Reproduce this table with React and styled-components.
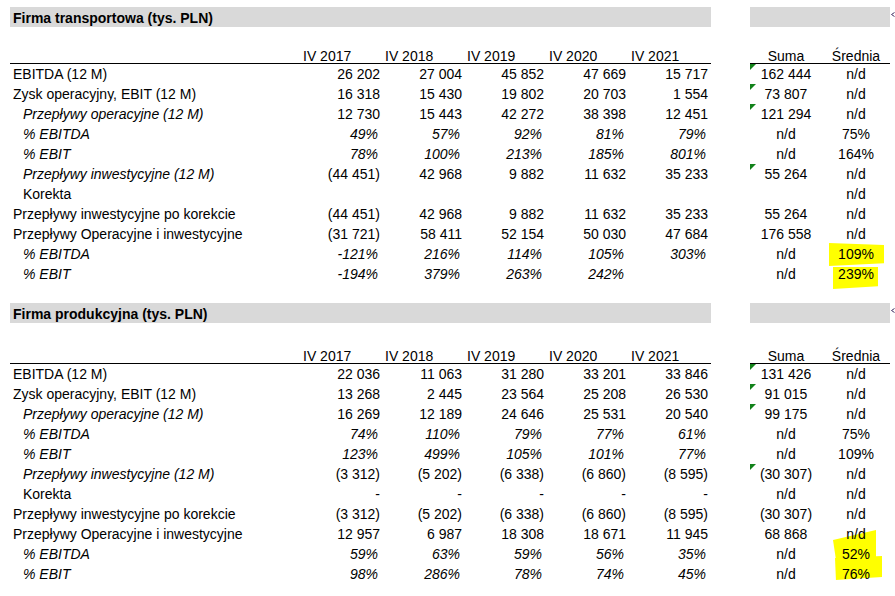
import React from "react";
import styled, { createGlobalStyle } from "styled-components";

const Global = createGlobalStyle`
  html, body { margin: 0; padding: 0; background: #fff; }
  body {
    font-family: "Liberation Sans", Arial, sans-serif;
    font-size: 14px;
    color: #000;
  }
`;

const Page = styled.div`
  padding: 7px 0 0 10px;
`;

const Section = styled.section`
  display: flex;
  align-items: flex-start;
  margin-top: ${(p) => p.$mt || 0}px;
`;

const Left = styled.div`
  flex: 0 0 701px;
  width: 701px;
  display: flex;
  flex-direction: column;
`;

const Right = styled.div`
  flex: 0 0 140px;
  width: 140px;
  margin-left: 39px;
  display: flex;
  flex-direction: column;
`;

const BarRow = styled.div`
  display: flex;
  align-items: center;
  height: 20px;
`;

const Bar = styled.div`
  flex: 0 0 ${(p) => p.$w || "100%"};
  height: 20px;
  background: #d9d9d9;
  font-weight: bold;
  line-height: 23px;
  padding-left: 3px;
  box-sizing: border-box;
  white-space: nowrap;
`;

const Marker = styled.svg`
  margin-left: 1px;
  margin-top: -5px;
  flex: none;
`;

const LeftGrid = styled.div`
  display: grid;
  grid-template-columns: 288px repeat(5, 82px) 1fr;
`;

const RightGrid = styled.div`
  display: grid;
  grid-template-columns: 72px 68px;
`;

const HeadLeft = styled(LeftGrid)`
  height: ${(p) => p.$h}px;
  border-bottom: 1px solid #000;
  align-items: end;
`;

const HeadRight = styled(RightGrid)`
  height: ${(p) => p.$h}px;
  border-bottom: 1px solid #000;
  align-items: end;
`;

const HeadCell = styled.div`
  line-height: 12px;
  padding-bottom: 1px;
  padding-left: ${(p) => (p.$center ? 0 : 5)}px;
  text-align: ${(p) => (p.$center ? "center" : "left")};
  white-space: nowrap;
`;

const RowLeft = styled(LeftGrid)`
  height: 20px;
  line-height: 21px;
`;

const RowRight = styled(RightGrid)`
  height: 20px;
  line-height: 21px;
`;

const Label = styled.div`
  padding-left: ${(p) => (p.$indent ? 13 : 3)}px;
  font-style: ${(p) => (p.$italic ? "italic" : "normal")};
  white-space: nowrap;
`;

const Num = styled.div`
  text-align: right;
  padding-right: ${(p) => (p.$italic ? 2 : 0)}px;
  font-style: ${(p) => (p.$italic ? "italic" : "normal")};
  white-space: nowrap;
`;

const SideCell = styled.div`
  position: relative;
  text-align: center;
  white-space: nowrap;
  ${(p) =>
    p.$flag &&
    `
    &::before {
      content: "";
      position: absolute;
      left: 0;
      top: 0;
      width: 0;
      height: 0;
      border-top: 6px solid #12821a;
      border-right: 6px solid transparent;
    }
  `}
`;

const CellText = styled.span`
  position: relative;
  z-index: 1;
`;

const Highlight = styled.span`
  position: absolute;
  background: #ffff00;
  z-index: 0;
`;

const L = (text, opts = {}) => ({ text, ...opts });

const labels = [
  L("EBITDA (12 M)"),
  L("Zysk operacyjny, EBIT (12 M)"),
  L("Przepływy operacyjne (12 M)", { indent: true, italic: true }),
  L("% EBITDA", { indent: true, italic: true }),
  L("% EBIT", { indent: true, italic: true }),
  L("Przepływy inwestycyjne (12 M)", { indent: true, italic: true }),
  L("Korekta", { indent: true }),
  L("Przepływy inwestycyjne po korekcie"),
  L("Przepływy Operacyjne i inwestycyjne"),
  L("% EBITDA", { indent: true, italic: true }),
  L("% EBIT", { indent: true, italic: true }),
];

const italicRows = [3, 4, 9, 10];

const sections = [
  {
    title: "Firma transportowa (tys. PLN)",
    mt: 0,
    head: 36,
    values: [
      ["26 202", "27 004", "45 852", "47 669", "15 717"],
      ["16 318", "15 430", "19 802", "20 703", "1 554"],
      ["12 730", "15 443", "42 272", "38 398", "12 451"],
      ["49%", "57%", "92%", "81%", "79%"],
      ["78%", "100%", "213%", "185%", "801%"],
      ["(44 451)", "42 968", "9 882", "11 632", "35 233"],
      ["", "", "", "", ""],
      ["(44 451)", "42 968", "9 882", "11 632", "35 233"],
      ["(31 721)", "58 411", "52 154", "50 030", "47 684"],
      ["-121%", "216%", "114%", "105%", "303%"],
      ["-194%", "379%", "263%", "242%", ""],
    ],
    side: [
      { suma: "162 444", flag: true, sr: "n/d" },
      { suma: "73 807", flag: true, sr: "n/d" },
      { suma: "121 294", flag: true, sr: "n/d" },
      { suma: "n/d", sr: "75%" },
      { suma: "n/d", sr: "164%" },
      { suma: "55 264", flag: true, sr: "n/d" },
      { suma: "", sr: "n/d" },
      { suma: "55 264", sr: "n/d" },
      { suma: "176 558", sr: "n/d" },
      {
        suma: "n/d",
        sr: "109%",
        hl: { x: 7, y: -1, w: 55, h: 23, clip: "polygon(0 0, 100% 9%, 100% 88%, 0 100%)" },
      },
      {
        suma: "n/d",
        sr: "239%",
        hl: { x: 11, y: 3, w: 45, h: 22, clip: "polygon(0 0, 100% 0, 100% 88%, 0 100%)" },
      },
    ],
  },
  {
    title: "Firma produkcyjna (tys. PLN)",
    mt: 19,
    head: 40,
    values: [
      ["22 036", "11 063", "31 280", "33 201", "33 846"],
      ["13 268", "2 445", "23 564", "25 208", "26 530"],
      ["16 269", "12 189", "24 646", "25 531", "20 540"],
      ["74%", "110%", "79%", "77%", "61%"],
      ["123%", "499%", "105%", "101%", "77%"],
      ["(3 312)", "(5 202)", "(6 338)", "(6 860)", "(8 595)"],
      ["-", "-", "-", "-", "-"],
      ["(3 312)", "(5 202)", "(6 338)", "(6 860)", "(8 595)"],
      ["12 957", "6 987", "18 308", "18 671", "11 945"],
      ["59%", "63%", "59%", "56%", "35%"],
      ["98%", "286%", "78%", "74%", "45%"],
    ],
    side: [
      { suma: "131 426", flag: true, sr: "n/d" },
      { suma: "91 015", flag: true, sr: "n/d" },
      { suma: "99 175", flag: true, sr: "n/d" },
      { suma: "n/d", sr: "75%" },
      { suma: "n/d", sr: "109%" },
      { suma: "(30 307)", flag: true, sr: "n/d" },
      { suma: "n/d", sr: "n/d" },
      { suma: "(30 307)", sr: "n/d" },
      { suma: "68 868", sr: "n/d" },
      {
        suma: "n/d",
        sr: "52%",
        hl: { x: 11, y: -14, w: 43, h: 30, clip: "polygon(0 33%, 100% 0, 100% 93%, 7% 100%)" },
      },
      {
        suma: "n/d",
        sr: "76%",
        hl: { x: 13, y: -8, w: 47, h: 24, clip: "polygon(0 8%, 100% 0, 100% 88%, 2% 100%)" },
      },
    ],
  },
];

const years = ["IV 2017", "IV 2018", "IV 2019", "IV 2020", "IV 2021"];

function Block({ s }) {
  return (
    <Section $mt={s.mt}>
      <Left>
        <BarRow>
          <Bar>{s.title}</Bar>
        </BarRow>
        <HeadLeft $h={s.head}>
          <div />
          {years.map((y) => (
            <HeadCell key={y}>{y}</HeadCell>
          ))}
          <div />
        </HeadLeft>
        {labels.map((l, i) => (
          <RowLeft key={i}>
            <Label $indent={l.indent} $italic={l.italic}>
              {l.text}
            </Label>
            {s.values[i].map((v, j) => (
              <Num key={j} $italic={italicRows.includes(i)}>
                {v}
              </Num>
            ))}
            <div />
          </RowLeft>
        ))}
      </Left>
      <Right>
        <BarRow>
          <Bar $w="140px" />
          <Marker width="4" height="5" viewBox="0 0 4 5">
            <path d="M3.5 0.5 L0.5 2.5 L3.5 4.5" fill="none" stroke="#443366" strokeWidth="1" />
          </Marker>
        </BarRow>
        <HeadRight $h={s.head}>
          <HeadCell $center>Suma</HeadCell>
          <HeadCell $center>Średnia</HeadCell>
        </HeadRight>
        {s.side.map((r, i) => (
          <RowRight key={i}>
            <SideCell $flag={r.flag}>{r.suma}</SideCell>
            <SideCell>
              {r.hl && (
                <Highlight
                  style={{
                    left: r.hl.x,
                    top: r.hl.y,
                    width: r.hl.w,
                    height: r.hl.h,
                    clipPath: r.hl.clip,
                  }}
                />
              )}
              <CellText>{r.sr}</CellText>
            </SideCell>
          </RowRight>
        ))}
      </Right>
    </Section>
  );
}

export default function App() {
  return (
    <>
      <Global />
      <Page>
        {sections.map((s, i) => (
          <Block key={i} s={s} />
        ))}
      </Page>
    </>
  );
}
